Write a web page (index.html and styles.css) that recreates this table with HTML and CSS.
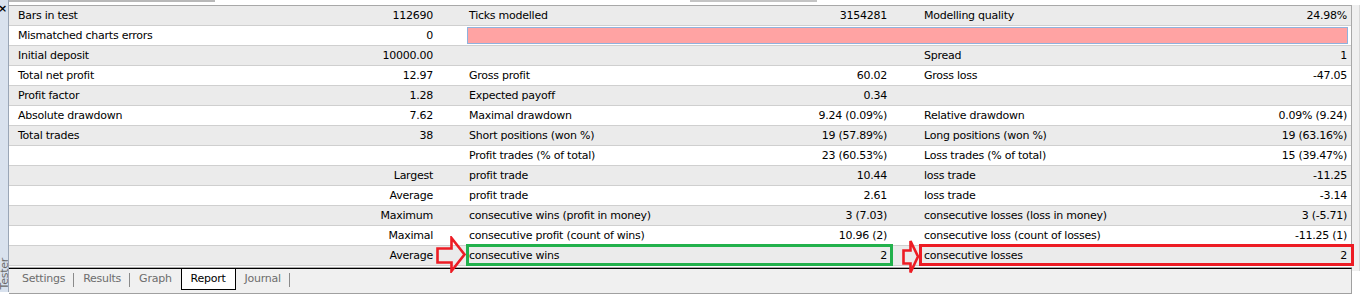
FILE: index.html
```html
<!DOCTYPE html>
<html>
<head>
<meta charset="utf-8">
<link rel="stylesheet" href="styles.css">
</head>
<body>
<div class="app">
  <aside class="side">
    <span class="close">×</span>
    <span class="vtitle">Tester</span>
  </aside>
  <main class="main">
    <div class="topbar"><span class="thumb t1"></span><span class="thumb t2"></span></div>
    <div class="report">
      <div class="row"><div class="cell c1"><span>Bars in test</span><span>112690</span></div><div class="cell c2"><span>Ticks modelled</span><span>3154281</span></div><div class="cell c3"><span>Modelling quality</span><span>24.98%</span></div></div>
      <div class="row"><div class="cell c1"><span>Mismatched charts errors</span><span>0</span></div><div class="cell span23"><div class="qbar"></div></div></div>
      <div class="row"><div class="cell c1"><span>Initial deposit</span><span>10000.00</span></div><div class="cell c2"><span></span><span></span></div><div class="cell c3"><span>Spread</span><span>1</span></div></div>
      <div class="row"><div class="cell c1"><span>Total net profit</span><span>12.97</span></div><div class="cell c2"><span>Gross profit</span><span>60.02</span></div><div class="cell c3"><span>Gross loss</span><span>-47.05</span></div></div>
      <div class="row"><div class="cell c1"><span>Profit factor</span><span>1.28</span></div><div class="cell c2"><span>Expected payoff</span><span>0.34</span></div><div class="cell c3"><span></span><span></span></div></div>
      <div class="row"><div class="cell c1"><span>Absolute drawdown</span><span>7.62</span></div><div class="cell c2"><span>Maximal drawdown</span><span>9.24 (0.09%)</span></div><div class="cell c3"><span>Relative drawdown</span><span>0.09% (9.24)</span></div></div>
      <div class="row"><div class="cell c1"><span>Total trades</span><span>38</span></div><div class="cell c2"><span>Short positions (won %)</span><span>19 (57.89%)</span></div><div class="cell c3"><span>Long positions (won %)</span><span>19 (63.16%)</span></div></div>
      <div class="row"><div class="cell c1"><span></span><span></span></div><div class="cell c2"><span>Profit trades (% of total)</span><span>23 (60.53%)</span></div><div class="cell c3"><span>Loss trades (% of total)</span><span>15 (39.47%)</span></div></div>
      <div class="row"><div class="cell c1"><span></span><span>Largest</span></div><div class="cell c2"><span>profit trade</span><span>10.44</span></div><div class="cell c3"><span>loss trade</span><span>-11.25</span></div></div>
      <div class="row"><div class="cell c1"><span></span><span>Average</span></div><div class="cell c2"><span>profit trade</span><span>2.61</span></div><div class="cell c3"><span>loss trade</span><span>-3.14</span></div></div>
      <div class="row"><div class="cell c1"><span></span><span>Maximum</span></div><div class="cell c2"><span>consecutive wins (profit in money)</span><span>3 (7.03)</span></div><div class="cell c3"><span>consecutive losses (loss in money)</span><span>3 (-5.71)</span></div></div>
      <div class="row"><div class="cell c1"><span></span><span>Maximal</span></div><div class="cell c2"><span>consecutive profit (count of wins)</span><span>10.96 (2)</span></div><div class="cell c3"><span>consecutive loss (count of losses)</span><span>-11.25 (1)</span></div></div>
      <div class="row last">
        <div class="cell c1"><span></span><span>Average</span></div>
        <div class="cell c2 mark-green"><span>consecutive wins</span><span>2</span></div>
        <div class="cell c3 mark-red"><span>consecutive losses</span><span>2</span></div>
        <svg class="arrow a1" width="31" height="37" viewBox="0 0 31 37"><polygon points="1.5,12.5 15.5,12.5 15.5,2 28.5,18.5 15.5,35 15.5,26.5 1.5,26.5" fill="none" stroke="#ed1c24" stroke-width="2.6"/></svg>
        <svg class="arrow a2" width="19" height="36" viewBox="0 0 19 36"><polygon points="1.5,11.5 8.5,11.5 8.5,2 16,17.5 8.5,33.5 8.5,24.5 1.5,24.5" fill="none" stroke="#ed1c24" stroke-width="2.6"/></svg>
      </div>
    </div>
    <nav class="tabs">
      <span class="tab sep">Settings</span>
      <span class="tab sep">Results</span>
      <span class="tab">Graph</span>
      <span class="tab active">Report</span>
      <span class="tab sep">Journal</span>
    </nav>
  </main>
  <div class="rside"></div>
</div>
</body>
</html>
```

FILE: styles.css
```css
html, body {
  margin: 0;
  padding: 0;
}
body {
  width: 1360px;
  height: 296px;
  overflow: hidden;
  background: #ffffff;
  font-family: "DejaVu Sans", Tahoma, sans-serif;
  font-size: 11px;
  letter-spacing: -0.25px;
  color: #000000;
}
.app {
  display: flex;
  height: 296px;
}
.side {
  width: 8px;
  height: 292px;
  flex: none;
  background: #d9e2ee;
  border-right: 1px solid #9aa6b6;
  display: flex;
  flex-direction: column;
  justify-content: space-between;
  overflow: hidden;
}
.close {
  font-size: 11px;
  font-weight: bold;
  line-height: 10px;
  margin-top: 4px;
  margin-left: -2px;
}
.vtitle {
  writing-mode: vertical-rl;
  transform: rotate(180deg);
  font-family: "DejaVu Sans", Tahoma, sans-serif;
  font-size: 11px;
  color: #6a6a6a;
  margin-left: -2px;
  margin-bottom: 3px;
}
.main {
  flex: 1;
  min-width: 0;
  display: flex;
  flex-direction: column;
}
.rside {
  width: 7px;
  flex: none;
  height: 266px;
  margin-top: 5px;
  background: #f0f0f0;
  border-right: 1px solid #d8d8d8;
}
.topbar {
  height: 5px;
  display: flex;
  align-items: flex-start;
}
.thumb {
  height: 2px;
  background: #b8b8b8;
}
.t1 {
  width: 206px;
}
.t2 {
  width: 127px;
  margin-left: 475px;
  background: #c4c4c4;
}
.report {
  border-top: 1px solid #a8a8a8;
  border-right: 1px solid #a8a8a8;
}
.row {
  display: grid;
  grid-template-columns: 428px 454px 1fr;
  height: 19px;
  border-bottom: 1px solid #cfcfcf;
  background: #ffffff;
  position: relative;
}
.row:nth-child(odd) {
  background: #ebebeb;
}
.cell {
  display: flex;
  justify-content: space-between;
  align-items: center;
  white-space: nowrap;
  padding-right: 4px;
  position: relative;
}
.c1 {
  padding-left: 9px;
}
.c2 {
  padding-left: 32px;
}
.c3 {
  padding-left: 33px;
}
.span23 {
  grid-column: 2 / 4;
  padding: 0 3px 0 30px;
  align-items: flex-start;
}
.qbar {
  flex: 1;
  height: 15px;
  margin-top: 1px;
  background: #ffa3a3;
  border: 1px solid #8fb2dd;
}
.mark-green::after,
.mark-red::after {
  content: "";
  position: absolute;
  top: -2px;
  bottom: -1px;
  border: 3px solid;
  pointer-events: none;
}
.mark-green::after {
  left: 29px;
  right: -2px;
  border-color: #22b14c;
}
.mark-red::after {
  left: 28px;
  right: -3px;
  border-color: #ed1c24;
}
.arrow {
  position: absolute;
  z-index: 2;
}
.a1 {
  left: 427px;
  top: -10px;
}
.a2 {
  left: 893px;
  top: -7px;
}
.tabs {
  margin-top: 2px;
  border-top: 1px solid #000000;
  box-shadow: 0 -1px 0 #a8a8a8;
  border-bottom: 1px solid #a0a0a0;
  border-right: 1px solid #a0a0a0;
  background: #f0f0f0;
  height: 24px;
  display: flex;
  align-items: flex-start;
  padding-left: 4px;
}
.tab {
  color: #6d6d6d;
  padding: 0 9px;
  height: 20px;
  line-height: 20px;
  position: relative;
}
.tab.sep::after {
  content: "";
  position: absolute;
  right: 0;
  top: 4px;
  height: 14px;
  width: 1px;
  background: #8a8a8a;
}
.tab.active {
  color: #000000;
  background: #ffffff;
  border: 1px solid #000000;
  border-top: none;
  padding: 0 9px;
}
```
